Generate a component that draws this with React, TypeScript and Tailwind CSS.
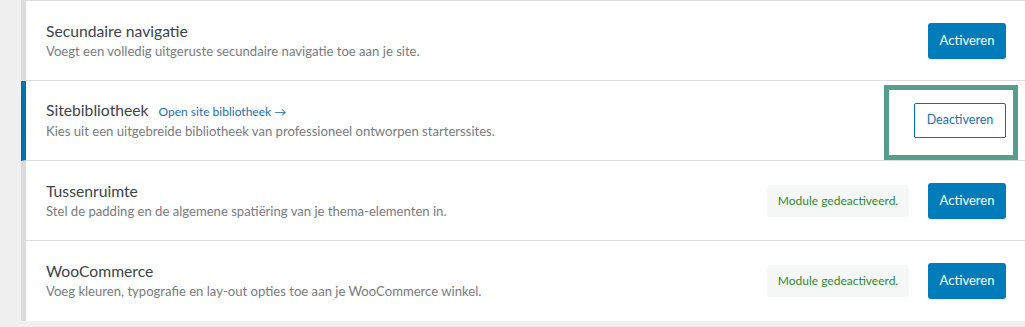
import React from "react";

type Module = {
  title: string;
  description: string;
  active: boolean;
  link?: string;
  deactivatedNote?: boolean;
  highlight?: boolean;
};

const modules: Module[] = [
  {
    title: "Secundaire navigatie",
    description: "Voegt een volledig uitgeruste secundaire navigatie toe aan je site.",
    active: false,
  },
  {
    title: "Sitebibliotheek",
    description: "Kies uit een uitgebreide bibliotheek van professioneel ontworpen starterssites.",
    active: true,
    link: "Open site bibliotheek →",
    highlight: true,
  },
  {
    title: "Tussenruimte",
    description: "Stel de padding en de algemene spatiëring van je thema-elementen in.",
    active: false,
    deactivatedNote: true,
  },
  {
    title: "WooCommerce",
    description: "Voeg kleuren, typografie en lay-out opties toe aan je WooCommerce winkel.",
    active: false,
    deactivatedNote: true,
  },
];

function ModuleRow({ mod, last }: { mod: Module; last: boolean }) {
  return (
    <div
      className={`relative flex h-[80px] items-center border-l-[5px] bg-white pl-[20px] pr-[19px] ${
        mod.active ? "border-l-[#0073aa]" : "border-l-[#dcdcde]"
      } ${last ? "" : "border-b border-b-[#dcdcde]"}`}
    >
      {/* Tekst */}
      <div className="flex flex-1 flex-col">
        <div className="flex items-baseline gap-[10px]">
          <span className="text-[15.7px] leading-[20px] text-[#3c434a]">{mod.title}</span>
          {mod.link && (
            <a className="text-[12px] text-[#2271b1]">{mod.link}</a>
          )}
        </div>
        <span className="mt-[1px] text-[13.1px] leading-[19px] text-[#787c82]">{mod.description}</span>
      </div>

      {/* Acties */}
      <div className="flex items-center gap-[19px]">
        {mod.deactivatedNote && (
          <span className="flex h-[32px] w-[142px] items-center justify-center rounded-[3px] bg-[#f6f7f7] text-[12px] text-[#2e8b2e]">
            Module gedeactiveerd.
          </span>
        )}
        {mod.active ? (
          <button className="h-[35px] w-[92px] rounded-[2px] border border-[#0073aa] bg-white text-[12.5px] text-[#2271b1]">
            Deactiveren
          </button>
        ) : (
          <button className="h-[36px] w-[78px] rounded-[3px] bg-[#007cba] text-[13px] text-white">
            Activeren
          </button>
        )}
      </div>

      {mod.highlight && (
        <div className="pointer-events-none absolute right-[7px] top-[4px] h-[75px] w-[134px] border-[5px] border-[#559e8c]" />
      )}
    </div>
  );
}

export default function App() {
  return (
    <div
      className="h-[327px] w-full overflow-hidden bg-[#f0f0f1] pl-[21px]"
      style={{ fontFamily: 'Lato, "Open Sans", sans-serif' }}
    >
      <div className="border-t border-t-[#dcdcde]">
        {modules.map((m, i) => (
          <ModuleRow key={m.title} mod={m} last={i === modules.length - 1} />
        ))}
      </div>
    </div>
  );
}
